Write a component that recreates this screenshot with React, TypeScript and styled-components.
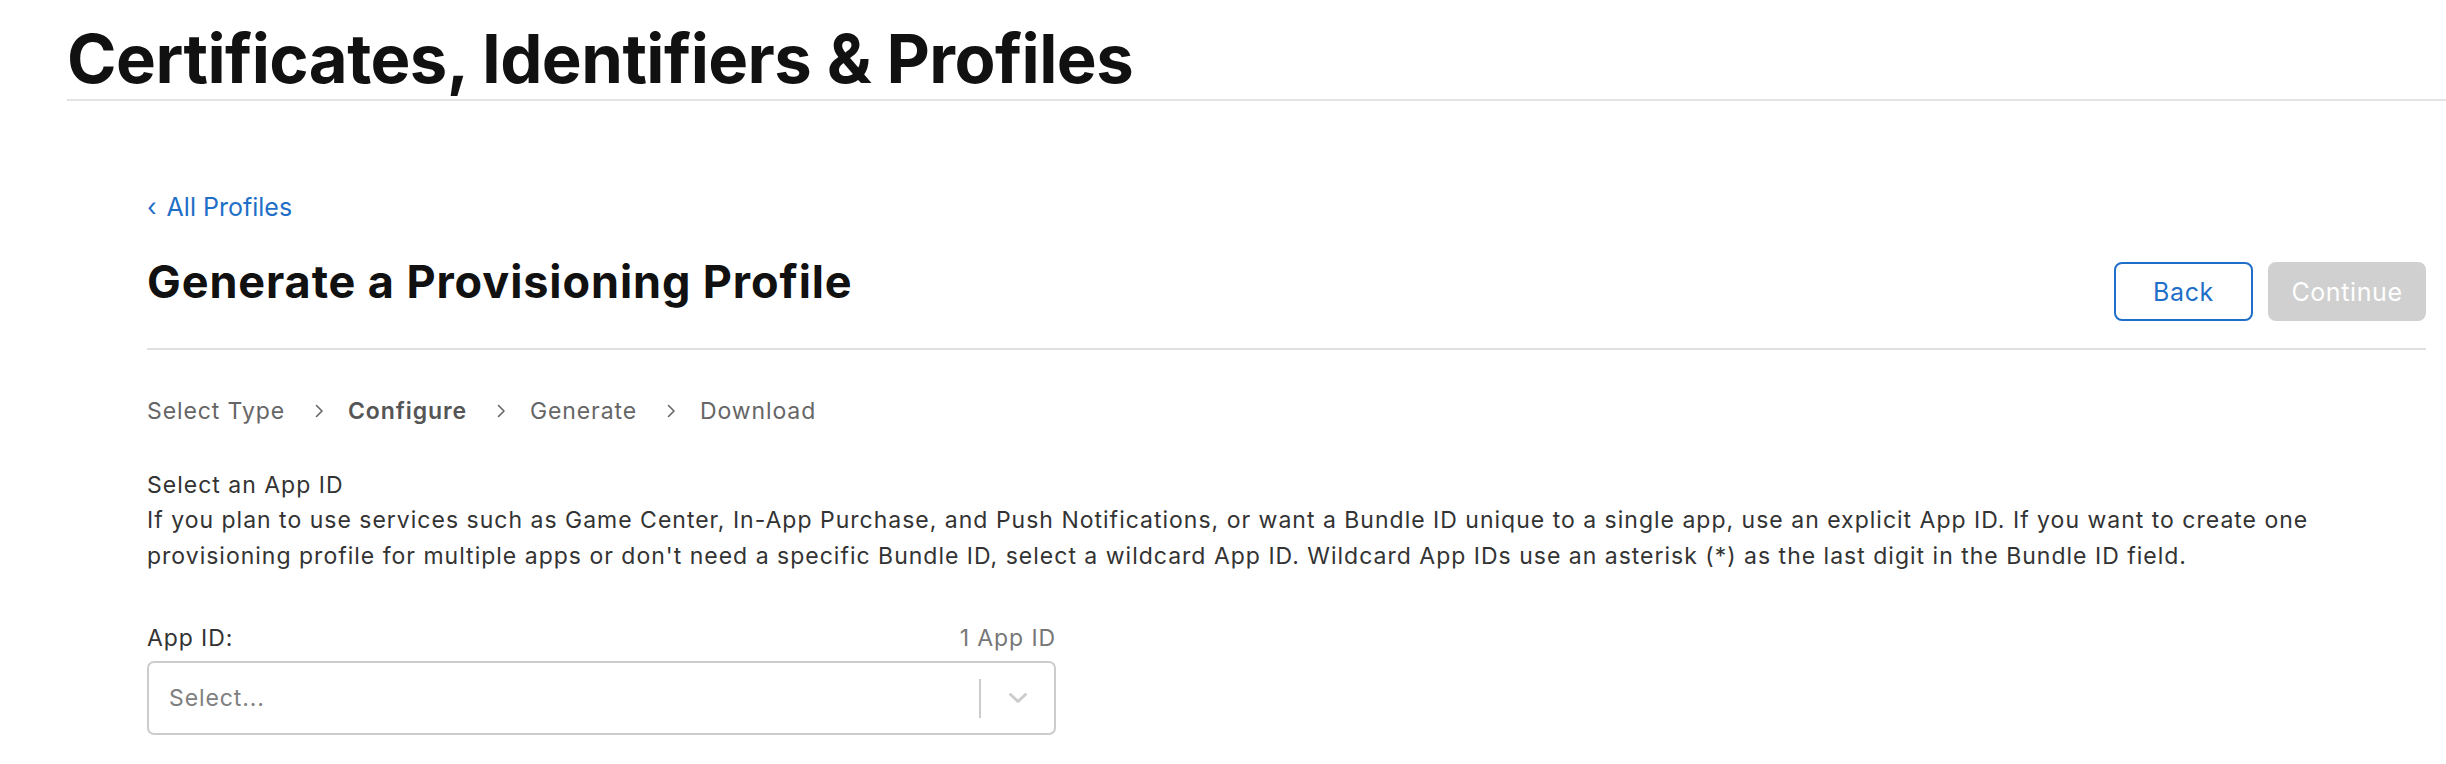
import React from "react";
import styled, { createGlobalStyle } from "styled-components";

const Global = createGlobalStyle`
  html, body { margin: 0; padding: 0; background: #ffffff; }
  body { font-family: Inter, "Liberation Sans", Arial, sans-serif; color: #333; }
`;

const Page = styled.div`
  width: 100%;
  overflow: hidden;
`;

const TopHeader = styled.header`
  margin-left: 67px;
  border-bottom: 2px solid #e3e3e3;
`;

const SiteTitle = styled.h1`
  margin: 0;
  padding-top: 19px;
  font-size: 67px;
  line-height: 80px;
  font-weight: 700;
  color: #111;
  letter-spacing: -0.55px;
`;

const Main = styled.main`
  padding: 0 20px 0 147px;
`;

const LinkRow = styled.div`
  margin-top: 91px;
  height: 30px;
`;

const BackLink = styled.a`
  display: inline-flex;
  align-items: baseline;
  gap: 10px;
  font-size: 25px;
  line-height: 30px;
  color: #1f6fc8;
  text-decoration: none;
`;

const TitleRow = styled.div`
  display: flex;
  align-items: flex-start;
  justify-content: space-between;
  margin-top: 33px;
  padding-bottom: 27px;
  border-bottom: 2px solid #e0e0e0;
`;

const PageTitle = styled.h2`
  margin: 0;
  font-size: 45px;
  line-height: 54px;
  font-weight: 700;
  color: #111;
  letter-spacing: 0.9px;
`;

const Buttons = styled.div`
  display: flex;
  gap: 15px;
  margin-top: 7px;
`;

const Button = styled.button<{ $primary?: boolean; $w: number }>`
  width: ${(p) => p.$w}px;
  height: 59px;
  padding: 0;
  border-radius: 8px;
  font-family: inherit;
  font-size: 25px;
  letter-spacing: 0.6px;
  cursor: pointer;
  box-sizing: border-box;
  ${(p) =>
    p.$primary
      ? `background: #d0d0d0; color: #fff; border: 2px solid #d0d0d0;`
      : `background: #fff; color: #1f6fc8; border: 2px solid #1f6fc8;`}
`;

const Steps = styled.nav`
  display: flex;
  align-items: center;
  margin-top: 47px;
  font-size: 23px;
  line-height: 28px;
  letter-spacing: 0.9px;
  color: #666;
`;

const Step = styled.span<{ $active?: boolean }>`
  font-weight: ${(p) => (p.$active ? 600 : 400)};
  color: ${(p) => (p.$active ? "#555" : "#666")};
`;

const StepSep = styled.span`
  display: inline-flex;
  margin: 0 24px 0 30px;
`;

const SectionTitle = styled.div`
  margin-top: 43px;
  font-size: 23px;
  line-height: 34px;
  letter-spacing: 1px;
  color: #333;
`;

const Para = styled.p`
  margin: 0;
  font-size: 23px;
  line-height: 36px;
  letter-spacing: 1px;
  color: #333;
`;

const Field = styled.div`
  width: 909px;
  margin-top: 50px;
`;

const FieldHead = styled.div`
  display: flex;
  justify-content: space-between;
  align-items: baseline;
  font-size: 23px;
  line-height: 28px;
  letter-spacing: 0.9px;
`;

const FieldLabel = styled.label`
  color: #333;
`;

const FieldCount = styled.span`
  color: #777;
`;

const SelectBox = styled.div`
  margin-top: 9px;
  height: 74px;
  box-sizing: border-box;
  border: 2px solid #cccccc;
  border-radius: 7px;
  display: flex;
  align-items: center;
`;

const Placeholder = styled.span`
  flex: 1;
  padding-left: 20px;
  font-size: 23px;
  letter-spacing: 0.9px;
  color: #808080;
`;

const Divider = styled.span`
  width: 2px;
  height: 39px;
  background: #cccccc;
`;

const Indicator = styled.span`
  width: 73px;
  display: flex;
  justify-content: center;
  align-items: center;
`;

const Chevron = () => (
  <svg width="9" height="14" viewBox="0 0 9 14" fill="none">
    <path d="M1.5 1.5 L7 7 L1.5 12.5" stroke="#666" strokeWidth="1.6" strokeLinecap="round" strokeLinejoin="round" />
  </svg>
);

const DownChevron = () => (
  <svg width="20" height="12" viewBox="0 0 20 12" fill="none">
    <path d="M2.5 2.5 L10 9.5 L17.5 2.5" stroke="#cccccc" strokeWidth="3" strokeLinecap="round" strokeLinejoin="round" />
  </svg>
);

export default function App() {
  return (
    <Page>
      <Global />
      <TopHeader>
        <SiteTitle>Certificates, Identifiers &amp; Profiles</SiteTitle>
      </TopHeader>
      <Main>
        <LinkRow>
          <BackLink href="#">
            <span>‹</span>
            <span>All Profiles</span>
          </BackLink>
        </LinkRow>
        <TitleRow>
          <PageTitle>Generate a Provisioning Profile</PageTitle>
          <Buttons>
            <Button $w={139}>Back</Button>
            <Button $primary $w={158}>Continue</Button>
          </Buttons>
        </TitleRow>
        <Steps>
          <Step>Select Type</Step>
          <StepSep><Chevron /></StepSep>
          <Step $active>Configure</Step>
          <StepSep><Chevron /></StepSep>
          <Step>Generate</Step>
          <StepSep><Chevron /></StepSep>
          <Step>Download</Step>
        </Steps>
        <SectionTitle>Select an App ID</SectionTitle>
        <Para>
          If you plan to use services such as Game Center, In-App Purchase, and Push Notifications, or want a Bundle ID
          unique to a single app, use an explicit App ID. If you want to create one provisioning profile for multiple apps
          or don't need a specific Bundle ID, select a wildcard App ID. Wildcard App IDs use an asterisk (*) as the last
          digit in the Bundle ID field.
        </Para>
        <Field>
          <FieldHead>
            <FieldLabel>App ID:</FieldLabel>
            <FieldCount>1 App ID</FieldCount>
          </FieldHead>
          <SelectBox>
            <Placeholder>Select...</Placeholder>
            <Divider />
            <Indicator>
              <DownChevron />
            </Indicator>
          </SelectBox>
        </Field>
      </Main>
    </Page>
  );
}
